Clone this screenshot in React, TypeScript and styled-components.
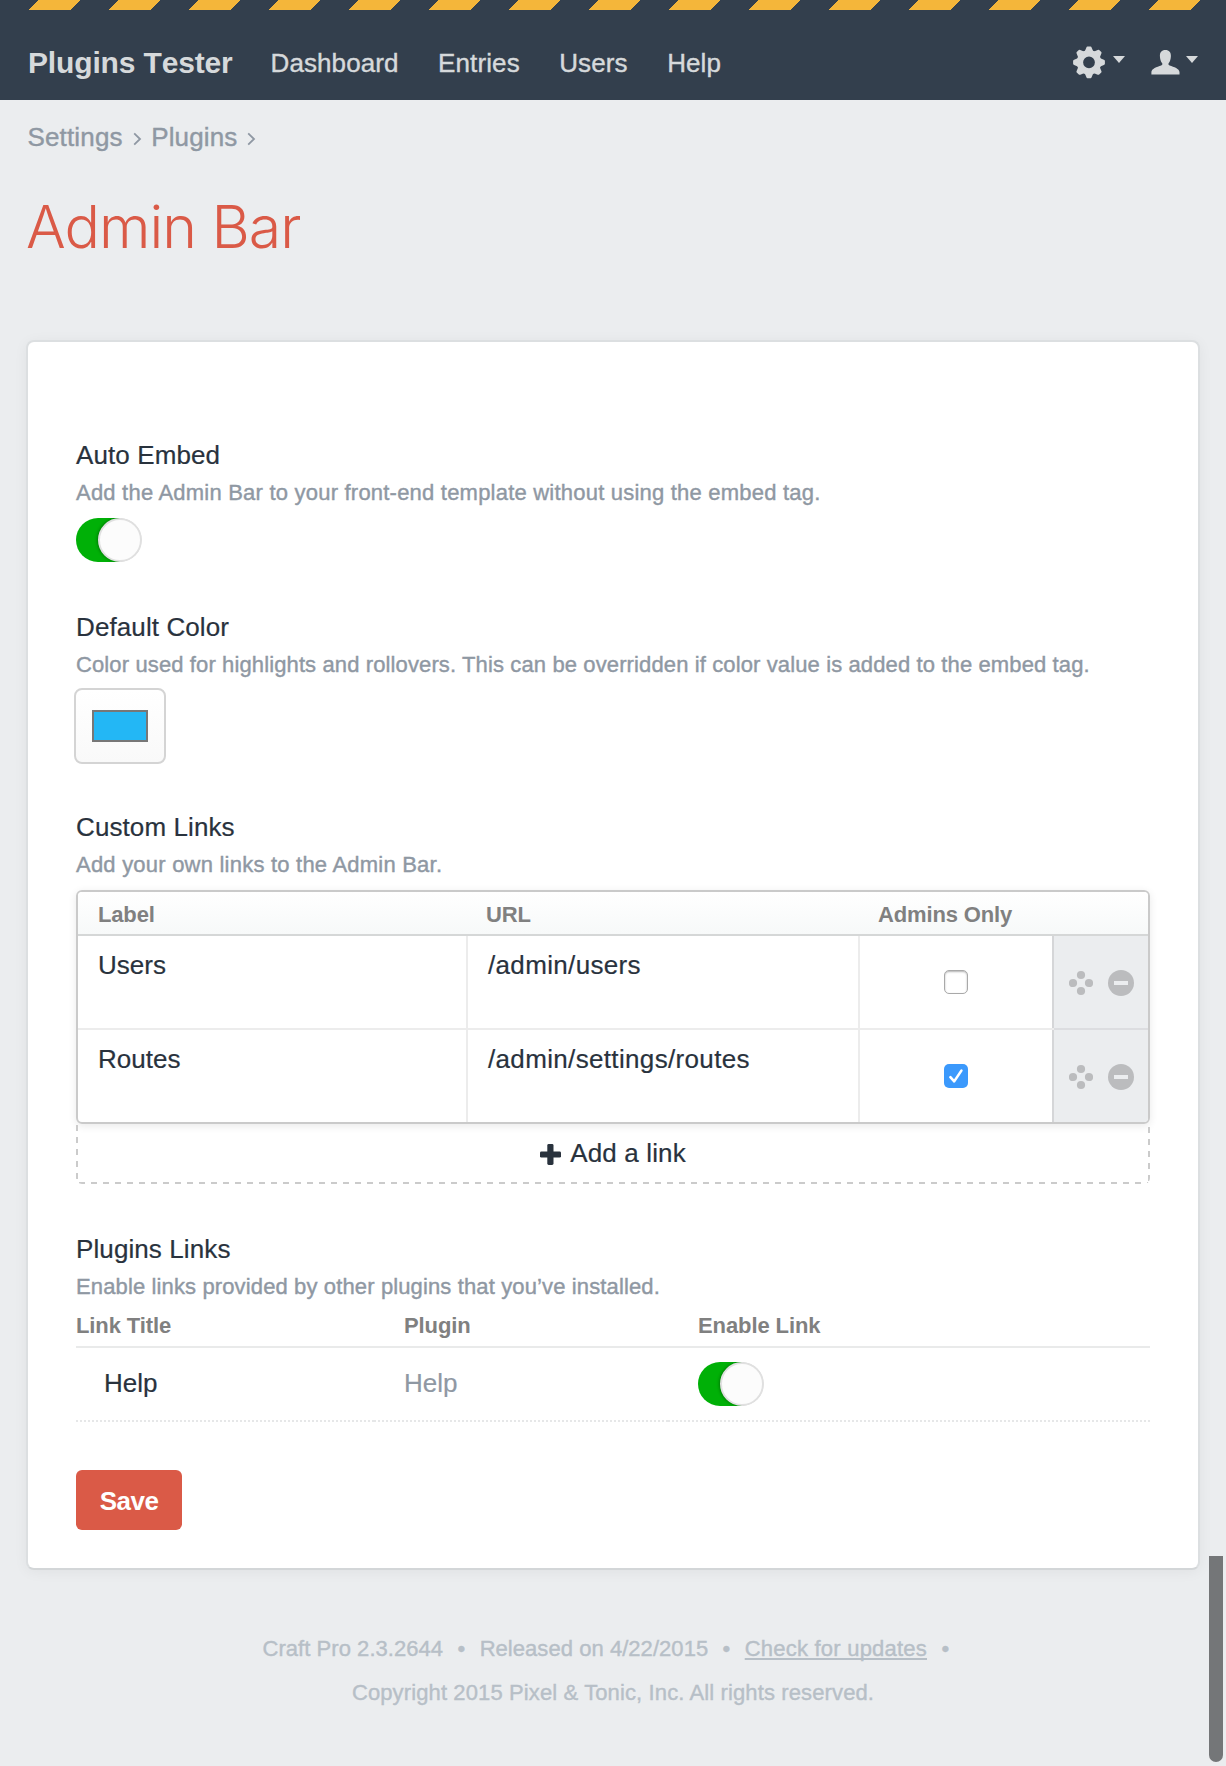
import React from 'react';
import styled, { createGlobalStyle } from 'styled-components';

const color = {
  page: '#ebedef',
  header: '#333f4d',
  headerText: '#d6d9db',
  stripe: '#f4b63a',
  text: '#29323d',
  muted: '#8f98a3',
  faint: '#b7bfc7',
  th: '#808080',
  red: '#da5a47',
  green: '#00b007',
};

const GlobalStyle = createGlobalStyle`
  html, body { margin: 0; padding: 0; background: ${color.page}; }
  body {
    font-family: 'Liberation Sans', Arial, Helvetica, sans-serif;
    font-size: 26px;
    color: ${color.text};
    overflow: hidden;
  }
  *, *::before, *::after { box-sizing: border-box; }
`;

const Page = styled.div`
  width: 1226px;
  height: 1766px;
  display: flex;
  flex-direction: column;
  background: ${color.page};
`;

const Header = styled.header`
  height: 100px;
  flex: none;
  background: ${color.header};
`;

const Stripes = styled.div`
  height: 10px;
  background: repeating-linear-gradient(
    135deg,
    ${color.stripe} 0 0.4px,
    ${color.header} 0.4px 27.1px,
    ${color.stripe} 27.1px 56.569px
  );
`;

const HeaderRow = styled.div`
  height: 90px;
  padding: 16px 28px 0 28px;
  display: flex;
  line-height: 74px;
  color: ${color.headerText};
`;

const Brand = styled.strong`
  width: 242.5px;
  font-size: 30px;
  font-kerning: none;
  letter-spacing: -0.15px;
  white-space: nowrap;
`;

const Nav = styled.nav`
  display: flex;
  gap: 39.5px;
  flex: 1;
`;

const NavLink = styled.a`
  color: inherit;
  letter-spacing: 0.1px;
  -webkit-text-stroke: 0.4px currentColor;
`;

const HeaderMenus = styled.div`
  display: flex;
  align-items: flex-start;
  gap: 26px;
`;

const MenuButton = styled.div<{ $gap: number; $top: number }>`
  display: flex;
  align-items: flex-start;
  gap: ${p => p.$gap}px;
  padding-top: ${p => p.$top}px;
`;

const Caret = styled.i<{ $top: number }>`
  margin-top: ${p => p.$top}px;
  border: 6px solid transparent;
  border-top: 7px solid ${color.headerText};
  border-bottom: 0;
`;

const Crumbs = styled.div`
  display: flex;
  align-items: center;
  margin-top: 19px;
  padding-left: 27.5px;
  height: 36px;
  line-height: 36px;
  letter-spacing: 0.15px;
  color: ${color.muted};
  -webkit-text-stroke: 0.4px currentColor;

  svg { margin: 4px 9.5px 0 10px; }
`;

const Title = styled.h1`
  margin: 31px 0 0;
  padding-left: 26px;
  height: 154px;
  line-height: 82px;
  font-family: Inter, 'Liberation Sans', sans-serif;
  font-size: 59px;
  font-weight: 300;
  letter-spacing: -1px;
  color: ${color.red};
`;

const Card = styled.main`
  margin: 0 26px;
  padding: 94px 48px 38px;
  border: 2px solid #dcdfe1;
  border-bottom-color: #d3d6d8;
  border-radius: 8px;
  background: #fff;
  box-shadow: 0 2px 14px rgba(0, 0, 0, 0.05);
`;

const Field = styled.section<{ $after: number }>`
  margin-bottom: ${p => p.$after}px;
`;

const FieldName = styled.h2`
  margin: 0;
  font-size: 26px;
  font-weight: 400;
  line-height: 38px;
  letter-spacing: 0.1px;
  -webkit-text-stroke: 0.2px currentColor;
`;

const Hint = styled.p<{ $after: number; $spacing: number }>`
  height: 36px;
  margin: 0 0 ${p => p.$after}px;
  font-size: 22px;
  line-height: 38px;
  letter-spacing: ${p => p.$spacing}px;
  white-space: nowrap;
  color: ${color.muted};
  -webkit-text-stroke: 0.4px currentColor;
`;

const Switch = styled.div`
  display: flex;
  justify-content: flex-end;
  width: 66px;
  height: 44px;
  border-radius: 22px;
  overflow: hidden;
  background: linear-gradient(90deg, ${color.green} 44px, transparent 44px);
`;

const Knob = styled.span`
  width: 44px;
  height: 44px;
  border: 2px solid #e0e0e0;
  border-radius: 50%;
  background: #fcfcfc;
  box-shadow: -1px 0 3px rgba(0, 0, 0, 0.3);
`;

const ColorButton = styled.div`
  display: flex;
  justify-content: center;
  width: 92px;
  height: 76px;
  margin-left: -2px;
  padding-top: 20px;
  border: 2px solid #d4d4d4;
  border-radius: 8px;
  background: linear-gradient(#fff, #f9f9f9);
`;

const Swatch = styled.span`
  width: 56px;
  height: 32px;
  border: 2px solid #777;
  background: #23b7f5;
`;

const LinkTable = styled.div`
  border: 2px solid #cacaca;
  border-radius: 6px;
  overflow: hidden;
  box-shadow: 0 2px 8px rgba(0, 0, 0, 0.09);
`;

const HeadRow = styled.div`
  display: grid;
  grid-template-columns: 388px 392px 1fr;
  height: 44px;
  padding-left: 20px;
  border-bottom: 2px solid #d5d7d7;
  background: linear-gradient(#fff, #f7f9f9);
  font-size: 22px;
  font-weight: 700;
  line-height: 45px;
  letter-spacing: -0.15px;
  color: ${color.th};
`;

const LinkRow = styled.div`
  display: grid;
  grid-template-columns: 390px 392px 194px 94px;
  height: 92px;

  & + & {
    height: 94px;
    border-top: 2px solid #ececec;
  }
`;

const Cell = styled.div<{ $spacing: number }>`
  padding-left: 20px;
  border-right: 2px solid #ececec;
  line-height: 58px;
  letter-spacing: ${p => p.$spacing}px;
  -webkit-text-stroke: 0.2px currentColor;
`;

const CheckCell = styled.div`
  display: flex;
  justify-content: center;
  padding-top: 34px;
  border-right: 2px solid #d5d6d8;
`;

const Checkbox = styled.span<{ $on: boolean }>`
  width: 24px;
  height: 24px;
  border-radius: 5px;
  border: ${p => (p.$on ? '0' : '1px solid #a9a9a9')};
  background: ${p => (p.$on ? '#3b99fc' : '#fff')};
  box-shadow: ${p => (p.$on ? 'none' : 'inset 0 1px 2px rgba(0,0,0,0.3)')};

  svg { display: block; }
`;

const ActionCell = styled.div`
  display: flex;
  align-items: flex-start;
  gap: 15px;
  padding: 34px 0 0 15px;
  background: ${color.page};

  ${LinkRow} + ${LinkRow} & {
    margin-top: -2px;
    border-top: 2px solid #dcdde0;
  }
`;

const dash = '#cbcbcb';
const AddRow = styled.div`
  display: flex;
  justify-content: center;
  gap: 9px;
  height: 60px;
  line-height: 58px;
  letter-spacing: 0.15px;
  -webkit-text-stroke: 0.2px currentColor;
  border-radius: 0 0 6px 6px;
  background:
    repeating-linear-gradient(90deg, transparent 0 3px, ${dash} 3px 9px, transparent 9px 12px) 0 100% / 100% 2px no-repeat,
    repeating-linear-gradient(180deg, ${dash} 0 6px, transparent 6px 12px) 0 1px / 2px 100% no-repeat,
    repeating-linear-gradient(180deg, ${dash} 0 6px, transparent 6px 12px) 100% 3px / 2px 100% no-repeat;

  svg { margin-top: 20px; }
`;

const PluginGrid = styled.div`
  display: grid;
  grid-template-columns: 298px 294px 1fr;
`;

const PluginHead = styled.div<{ $indent: number }>`
  height: 44px;
  padding: 2px 0 0 ${p => p.$indent}px;
  border-bottom: 2px solid #e9eaea;
  font-size: 22px;
  font-weight: 700;
  line-height: 40px;
  letter-spacing: -0.1px;
  color: ${color.th};
`;

const PluginCell = styled.div<{ $indent: number; $muted?: boolean }>`
  height: 74px;
  padding-left: ${p => p.$indent}px;
  line-height: 70px;
  color: ${p => (p.$muted ? color.muted : color.text)};
  -webkit-text-stroke: 0.2px currentColor;
  background: repeating-linear-gradient(90deg, #e6e7e8 0 2px, transparent 2px 4px) 0 100% / 100% 2px no-repeat;

  ${Switch} { margin-top: 14px; }
`;

const SaveButton = styled.button`
  display: block;
  width: 106px;
  height: 60px;
  padding: 0;
  border: 0;
  border-radius: 6px;
  background: ${color.red};
  color: #fff;
  font: 700 26px/62px 'Liberation Sans', Arial, sans-serif;
  letter-spacing: -0.5px;
`;

const Footer = styled.footer`
  display: flex;
  flex-direction: column;
  align-items: center;
  margin-top: 57px;
  font-size: 22px;
  line-height: 44px;
  color: ${color.faint};
  -webkit-text-stroke: 0.4px currentColor;
`;

const FooterLine = styled.div<{ $spacing: number }>`
  display: flex;
  letter-spacing: ${p => p.$spacing}px;
  white-space: nowrap;
`;

const Bullet = styled.span`
  width: 36.5px;
  text-align: center;
`;

const UpdateLink = styled.a`
  letter-spacing: 0.22px;
  text-decoration: underline;
  text-decoration-thickness: 2px;
  text-underline-offset: 2px;
  text-decoration-skip-ink: none;
`;

const ScrollThumb = styled.div`
  position: fixed;
  left: 1209px;
  top: 1556px;
  width: 14px;
  height: 206px;
  border-radius: 0 0 7px 7px;
  background: #747678;
`;

const GearIcon = () => (
  <svg width="32" height="33" viewBox="0 0 32 33" fill={color.headerText}>
    <circle cx="16" cy="16.3" r="9.1" fill="none" stroke={color.headerText} strokeWidth="6.4" />
    {[0, 45, 90, 135, 180, 225, 270, 315].map(a => (
      <path
        key={a}
        d="M11.4 6.2 L13.4 1.4 Q13.7 .5 14.5 .4 H17.5 Q18.3 .5 18.6 1.4 L20.6 6.2 Z"
        transform={`rotate(${a} 16 16.3)`}
      />
    ))}
  </svg>
);

const UserIcon = () => (
  <svg width="29" height="25" viewBox="0 0 29 25" fill={color.headerText}>
    <path d="M14.4 0C18.2 0 20 2.4 19.9 6C19.8 9.4 19 11.6 17.6 13.2C17.2 14.4 17.6 15 18.6 15.4C23 16.8 28.4 18.6 28.5 22V24.6H.4V22C.5 18.6 5.8 16.8 10.2 15.4C11.2 15 11.6 14.4 11.2 13.2C9.8 11.6 9 9.4 8.9 6C8.8 2.4 10.6 0 14.4 0Z" />
  </svg>
);

const Chevron = () => (
  <svg width="9" height="14" viewBox="0 0 9 14" fill="none" stroke={color.muted} strokeWidth="1.8">
    <path d="M1.2 1.4 L7 7 L1.2 12.6" />
  </svg>
);

const MoveIcon = () => (
  <svg width="24" height="26" viewBox="0 0 24 26" fill="#bbbcbe">
    <circle cx="12" cy="5" r="4.1" />
    <circle cx="4" cy="13" r="4.1" />
    <circle cx="20" cy="13" r="4.1" />
    <circle cx="12" cy="21" r="4.1" />
  </svg>
);

const RemoveIcon = () => (
  <svg width="26" height="27" viewBox="0 0 26 27">
    <circle cx="13" cy="13" r="13" fill="#bbbcbe" />
    <rect x="6" y="11" width="14" height="4" fill={color.page} />
  </svg>
);

const PlusIcon = () => (
  <svg width="21" height="21" viewBox="0 0 21 21" fill={color.text}>
    <rect x="7.3" y="0" width="6.2" height="21" rx="1.4" />
    <rect x="0" y="7.4" width="21" height="6.2" rx="1.4" />
  </svg>
);

const CheckIcon = () => (
  <svg width="24" height="24" viewBox="0 0 24 24" fill="none" stroke="#fff" strokeWidth="2.6" strokeLinecap="round" strokeLinejoin="round">
    <path d="M6.4 13.2 L10.2 17.4 L17.4 6.6" />
  </svg>
);

const Toggle = () => (
  <Switch role="switch" aria-checked="true">
    <Knob />
  </Switch>
);

const links = [
  { label: 'Users', url: '/admin/users', adminsOnly: false },
  { label: 'Routes', url: '/admin/settings/routes', adminsOnly: true },
];

export default function App() {
  return (
    <Page>
      <GlobalStyle />
      <Header>
        <Stripes />
        <HeaderRow>
          <Brand>Plugins Tester</Brand>
          <Nav>
            <NavLink>Dashboard</NavLink>
            <NavLink>Entries</NavLink>
            <NavLink>Users</NavLink>
            <NavLink>Help</NavLink>
          </Nav>
          <HeaderMenus>
            <MenuButton $gap={8} $top={20}>
              <GearIcon />
              <Caret $top={10} />
            </MenuButton>
            <MenuButton $gap={6} $top={24}>
              <UserIcon />
              <Caret $top={6} />
            </MenuButton>
          </HeaderMenus>
        </HeaderRow>
      </Header>

      <Crumbs>
        <span>Settings</span>
        <Chevron />
        <span>Plugins</span>
        <Chevron />
      </Crumbs>
      <Title>Admin Bar</Title>

      <Card>
        <Field $after={46}>
          <FieldName>Auto Embed</FieldName>
          <Hint $after={8} $spacing={0.215}>
            Add the Admin Bar to your front-end template without using the embed tag.
          </Hint>
          <Toggle />
        </Field>

        <Field $after={44}>
          <FieldName>Default Color</FieldName>
          <Hint $after={6} $spacing={0.12}>
            Color used for highlights and rollovers. This can be overridden if color value is added to the embed tag.
          </Hint>
          <ColorButton>
            <Swatch />
          </ColorButton>
        </Field>

        <Field $after={46}>
          <FieldName>Custom Links</FieldName>
          <Hint $after={8} $spacing={0.22}>Add your own links to the Admin Bar.</Hint>
          <LinkTable>
            <HeadRow>
              <span>Label</span>
              <span>URL</span>
              <span>Admins Only</span>
            </HeadRow>
            {links.map(link => (
              <LinkRow key={link.label}>
                <Cell $spacing={0}>{link.label}</Cell>
                <Cell $spacing={0.34}>{link.url}</Cell>
                <CheckCell>
                  <Checkbox $on={link.adminsOnly}>{link.adminsOnly && <CheckIcon />}</Checkbox>
                </CheckCell>
                <ActionCell>
                  <MoveIcon />
                  <RemoveIcon />
                </ActionCell>
              </LinkRow>
            ))}
          </LinkTable>
          <AddRow>
            <PlusIcon />
            <span>Add a link</span>
          </AddRow>
        </Field>

        <Field $after={48}>
          <FieldName>Plugins Links</FieldName>
          <Hint $after={0} $spacing={0.13}>Enable links provided by other plugins that you’ve installed.</Hint>
          <PluginGrid>
            <PluginHead $indent={0}>Link Title</PluginHead>
            <PluginHead $indent={30}>Plugin</PluginHead>
            <PluginHead $indent={30}>Enable Link</PluginHead>
            <PluginCell $indent={28}>Help</PluginCell>
            <PluginCell $indent={30} $muted>Help</PluginCell>
            <PluginCell $indent={30}>
              <Toggle />
            </PluginCell>
          </PluginGrid>
        </Field>

        <SaveButton>Save</SaveButton>
      </Card>

      <Footer>
        <FooterLine $spacing={0.05}>
          <span>Craft Pro 2.3.2644</span>
          <Bullet>•</Bullet>
          <span>Released on 4/22/2015</span>
          <Bullet>•</Bullet>
          <UpdateLink>Check for updates</UpdateLink>
          <Bullet>•</Bullet>
        </FooterLine>
        <FooterLine $spacing={0.12}>Copyright 2015 Pixel &amp; Tonic, Inc. All rights reserved.</FooterLine>
      </Footer>
      <ScrollThumb />
    </Page>
  );
}
